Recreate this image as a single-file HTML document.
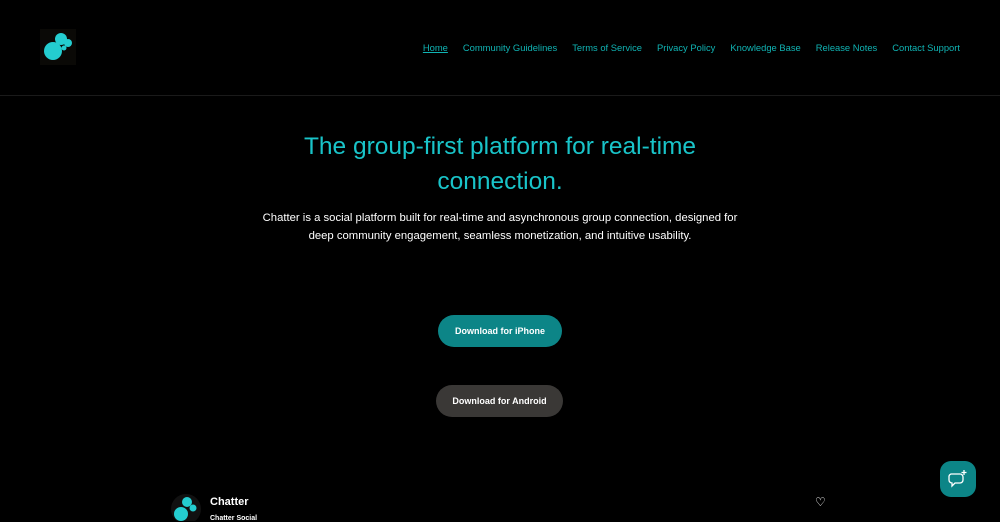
<!DOCTYPE html>
<html><head><style>
body{margin:0;width:1000px;height:521px;background:#000;overflow:hidden;font-family:"Liberation Sans",sans-serif;position:relative}
.nav{position:absolute;top:42px;right:40px;font-size:9.4px;line-height:12px;color:#10b4b4;display:flex;gap:15px}
.nav span:first-child{text-decoration:underline}
.hr{position:absolute;top:95px;left:0;width:1000px;height:1px;background:#1a1a1a}
h1{position:absolute;top:129px;left:0;width:1000px;text-align:center;margin:0;font-weight:400;font-size:24.5px;line-height:35px;color:#19c4c9}
p{position:absolute;top:208.5px;left:0;width:1000px;text-align:center;margin:0;font-size:11.3px;line-height:18.5px;color:#fff}
.b{position:absolute;border-radius:16px;height:32px;line-height:33px;text-align:center;color:#fff;font-size:9px;font-weight:bold}
</style></head><body>
<svg style="position:absolute;left:40px;top:29px" width="36" height="36"><rect width="36" height="36" fill="#0a0906"/><circle cx="13" cy="22" r="9" fill="#24cdd0"/><circle cx="21" cy="10" r="6" fill="#24cdd0"/><circle cx="28" cy="14" r="4" fill="#24cdd0"/><circle cx="24" cy="19" r="2.5" fill="#24cdd0"/></svg>
<div class="nav"><span>Home</span><span>Community Guidelines</span><span>Terms of Service</span><span>Privacy Policy</span><span>Knowledge Base</span><span>Release Notes</span><span>Contact Support</span></div>
<div class="hr"></div>
<h1>The group-first platform for real-time<br>connection.</h1>
<p>Chatter is a social platform built for real-time and asynchronous group connection, designed for<br>deep community engagement, seamless monetization, and intuitive usability.</p>
<div class="b" style="left:438px;top:315px;width:124px;background:#0c8587">Download for iPhone</div>
<div class="b" style="left:436px;top:385px;width:127px;background:#3a3836">Download for Android</div>
<div style="position:absolute;left:940px;top:461px;width:36px;height:36px;border-radius:11px;background:#0c8587"></div>
<svg style="position:absolute;left:947px;top:468px" width="22" height="22" fill="none" stroke="#fff" stroke-width="1.3"><path d="M4 6h9a3 3 0 0 1 3 3v3a3 3 0 0 1-3 3H8l-3 3v-3a3 3 0 0 1-3-3V9a3 3 0 0 1 2-3z"/><path d="M17 2v5M14.5 4.5h5"/></svg>
<svg style="position:absolute;left:171px;top:494px" width="30" height="27"><circle cx="15" cy="15" r="15" fill="#111"/><circle cx="10" cy="20" r="7" fill="#24cdd0"/><circle cx="16" cy="8" r="5" fill="#24cdd0"/><circle cx="22" cy="14" r="3.5" fill="#24cdd0"/></svg>
<div style="position:absolute;left:210px;top:496px;color:#fff;font-size:11px;font-weight:bold">Chatter</div>
<div style="position:absolute;left:210px;top:515px;color:#fff;font-size:7px;font-weight:bold">Chatter Social</div>
<div style="position:absolute;left:815px;top:495px;color:#fff;font-size:12px">♡</div>
</body></html>
